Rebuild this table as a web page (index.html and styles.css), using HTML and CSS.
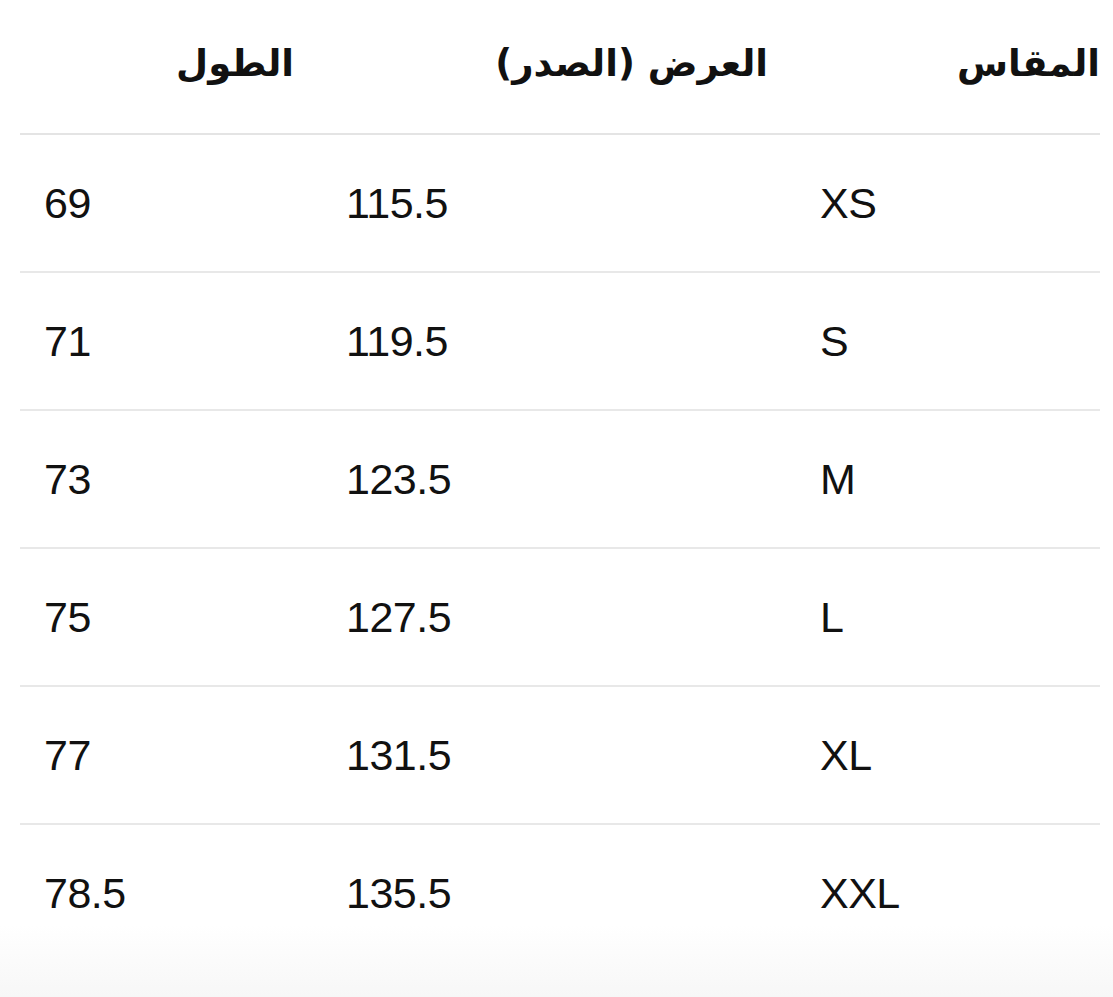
FILE: index.html
```html
<!DOCTYPE html>
<html lang="ar" dir="rtl">
<head>
<meta charset="utf-8">
<link rel="stylesheet" href="styles.css">
</head>
<body>
<table class="size-table">
  <colgroup>
    <col class="c-size">
    <col class="c-width">
    <col class="c-length">
  </colgroup>
  <thead>
    <tr>
      <th class="h-size">المقاس</th>
      <th>العرض (الصدر)</th>
      <th>الطول</th>
    </tr>
  </thead>
  <tbody>
    <tr><td>XS</td><td>115.5</td><td>69</td></tr>
    <tr><td>S</td><td>119.5</td><td>71</td></tr>
    <tr><td>M</td><td>123.5</td><td>73</td></tr>
    <tr><td>L</td><td>127.5</td><td>75</td></tr>
    <tr><td>XL</td><td>131.5</td><td>77</td></tr>
    <tr class="last"><td>XXL</td><td>135.5</td><td>78.5</td></tr>
  </tbody>
</table>
</body>
</html>
```
FILE: styles.css
```css
html {
  background: linear-gradient(to bottom, #ffffff 0, #ffffff 925px, #f7f7f7 997px);
  min-height: 100%;
}
body {
  margin: 0;
  padding: 0 13px 0 20px;
  color: #111;
}
.size-table {
  width: 1080px;
  border-collapse: collapse;
  table-layout: fixed;
}
.c-size { width: 304px; }
.c-width { width: 474px; }
.c-length { width: 302px; }
.size-table th {
  font-family: "DejaVu Sans", sans-serif;
  font-weight: bold;
  font-size: 37px;
  text-align: right;
  height: 127px;
  padding: 0 28px 6px 0;
  border-bottom: 2px solid #e4e4e4;
  vertical-align: middle;
}
.size-table th.h-size { padding-right: 0; }
.size-table td {
  font-family: "Liberation Sans", Arial, sans-serif;
  font-size: 43px;
  text-align: left;
  direction: ltr;
  height: 136px;
  padding: 0 0 0 24px;
  border-bottom: 2px solid #e8e8e8;
  vertical-align: middle;
  letter-spacing: -0.5px;
}
.size-table tr.last td { border-bottom: none; }
```
